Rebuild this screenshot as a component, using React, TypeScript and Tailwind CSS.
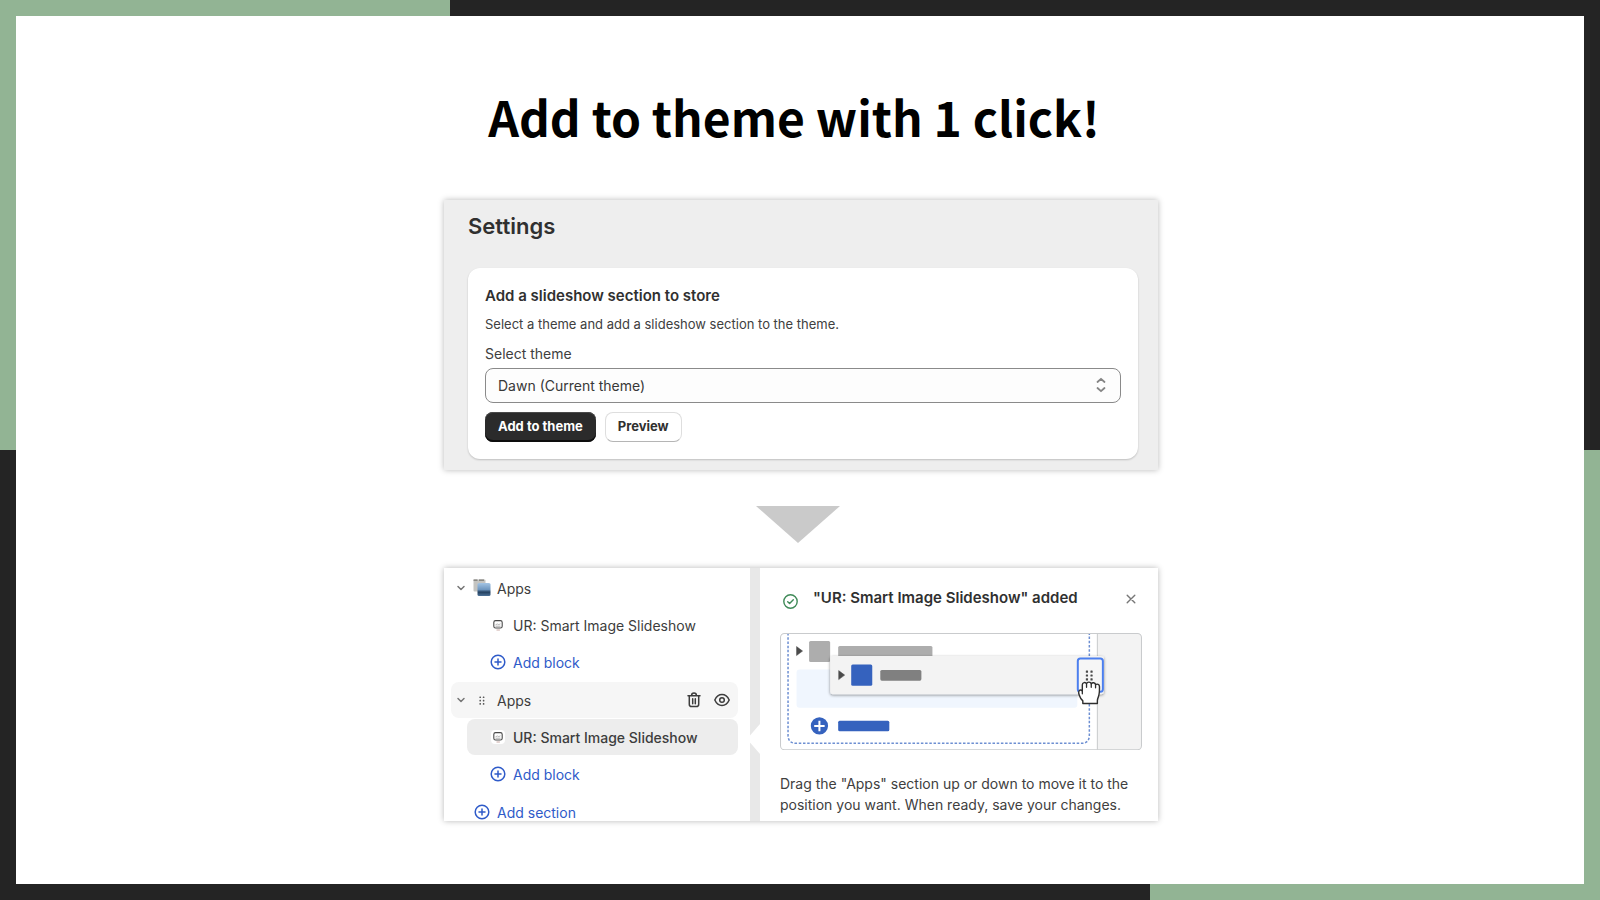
import type { ReactNode } from "react";
import { ChevronDown } from "lucide-react";

function PlusIcon() {
  return (
    <svg className="size-4 shrink-0" viewBox="0 0 16 16" fill="none" stroke="currentColor" strokeWidth="1.5" strokeLinecap="round" aria-hidden="true">
      <circle cx="8" cy="8" r="6.8" />
      <path d="M8 5v6M5 8h6" />
    </svg>
  );
}

function AppsThumb() {
  return (
    <svg className="size-[18px] shrink-0" viewBox="0 0 18 18" aria-hidden="true">
      <defs>
        <linearGradient id="sky" x1="0" y1="0" x2="0" y2="1">
          <stop offset="0" stopColor="#a3c4e4" />
          <stop offset="0.5" stopColor="#6f97c0" />
          <stop offset="0.7" stopColor="#23405f" />
          <stop offset="1" stopColor="#4d7298" />
        </linearGradient>
      </defs>
      <rect x="0.5" y="0.5" width="12" height="12" rx="1" fill="#c4c4c1" />
      <path d="M0.5 1.2h4M6 1.2h5" stroke="#77756f" strokeWidth="1.2" />
      <rect x="4.5" y="4" width="13" height="13" rx="1.5" fill="url(#sky)" />
    </svg>
  );
}

function BlockIcon() {
  return (
    <svg className="size-[14px] shrink-0 rounded-sm bg-white" viewBox="0 0 14 14" fill="none" aria-hidden="true">
      <rect x="2.8" y="2.6" width="8.4" height="7.4" rx="1.8" stroke="#4a4a4a" strokeWidth="1.1" />
      <path d="M4.5 6.8l1.8-.8 1.6.6 1.6-.8" stroke="#a5a5a5" strokeWidth="0.8" />
      <path d="M4.5 8.2h5" stroke="#999" strokeWidth="0.8" />
      <path d="M5.5 12h3.4" stroke="#c9a9a4" strokeWidth="1" />
    </svg>
  );
}

function DragDots() {
  return (
    <svg className="size-[18px] shrink-0" viewBox="0 0 18 18" fill="#5a5a5a" aria-hidden="true">
      {[5.5, 8.8, 12.1].map((y) => (
        <g key={y}>
          <rect x="6.4" y={y} width="1.6" height="1.6" rx="0.4" />
          <rect x="9.8" y={y} width="1.6" height="1.6" rx="0.4" />
        </g>
      ))}
    </svg>
  );
}

function TrashIcon() {
  return (
    <svg className="size-4" viewBox="0 0 16 16" fill="none" stroke="#3d3d3d" strokeWidth="1.5" strokeLinecap="round" strokeLinejoin="round" aria-hidden="true">
      <path d="M2 3.7h12M5.6 3.4C5.6 1.9 6.5 1.1 8 1.1s2.4.8 2.4 2.3M3.3 4v8.2c0 1.6.8 2.4 2.4 2.4h4.6c1.6 0 2.4-.8 2.4-2.4V4M6.7 6.7v5M9.3 6.7v5" />
    </svg>
  );
}

function EyeIcon() {
  return (
    <svg className="size-4" viewBox="0 0 16 16" fill="none" stroke="#3d3d3d" strokeWidth="1.5" aria-hidden="true">
      <path d="M.8 8C2.3 4.7 4.900 2.500 8 2.500s5.700 2.200 7.200 5.500c-1.500 3.300-4.100 5.500-7.200 5.500S2.300 11.300.8 8z" />
      <circle cx="8" cy="8" r="2.300" />
    </svg>
  );
}

function DragIllustration() {
  return (
    <svg className="block w-full" viewBox="0 0 361 117" role="img" aria-label="Dragging a section to a new position">
      <defs>
        <clipPath id="frame">
          <rect x="0.500" y="0.500" width="360" height="116" rx="4" />
        </clipPath>
        <filter id="lift" x="-5%" y="-20%" width="110%" height="150%">
          <feDropShadow dx="0" dy="1" stdDeviation="1.500" floodColor="#000" floodOpacity="0.45" />
        </filter>
      </defs>
      <g clipPath="url(#frame)">
        <rect width="361" height="117" fill="#fff" />
        <rect x="316" width="45" height="117" fill="#f3f3f3" />
        <path d="M316.500 0v117" stroke="#c9cbcd" />
        <rect x="16.500" y="36.500" width="280" height="38" rx="3" fill="#f0f6fe" />
        <path d="M8 0v102q0 8 8 8h284.500q8 0 8-8V0" fill="none" stroke="#6d8fd2" strokeWidth="1.500" strokeDasharray="2.500 1.700" />
        <path d="M16.500 13.500l6 4.500-6 4.500z" fill="#4b4b4b" stroke="#4b4b4b" strokeWidth="0.500" strokeLinejoin="round" />
        <rect x="29" y="8" width="21" height="21" rx="1.500" fill="#adadad" />
        <rect x="58" y="13" width="94" height="11" rx="1.500" fill="#adadad" />
        <circle cx="39.300" cy="92.700" r="8.600" fill="#3562be" />
        <path d="M39.300 87.500v10.400M34.100 92.700h10.400" stroke="#fff" strokeWidth="2" />
        <rect x="58" y="87.500" width="51" height="10.500" rx="1.500" fill="#3562be" />
      </g>
      <rect x="0.500" y="0.500" width="360" height="116" rx="4" fill="none" stroke="#c9cbcd" />
      <rect x="50" y="23" width="273" height="38" rx="3" fill="#f3f3f3" filter="url(#lift)" />
      <path d="M58.500 37.500l6 4.500-6 4.500z" fill="#4b4b4b" stroke="#4b4b4b" strokeWidth="0.500" strokeLinejoin="round" />
      <rect x="71" y="31.500" width="21" height="21" rx="1.500" fill="#3562be" />
      <rect x="100" y="37" width="41" height="10.500" rx="1.500" fill="#808080" />
      <rect x="297" y="25.500" width="25" height="33" rx="2.500" fill="#f6f6f6" stroke="#4c7fee" strokeWidth="2" />
      <g fill="#4a4a4a">
        {[37.500, 41.300, 45.100].map((y) => (
          <g key={y}>
            <rect x="305" y={y} width="2.200" height="2.200" rx="0.500" />
            <rect x="309.600" y={y} width="2.200" height="2.200" rx="0.500" />
          </g>
        ))}
      </g>
      <path
        d="M302 70.300v-2.600c-1.600-1.500-2.900-3.700-3.700-6.200-.9-2.600-.4-4.500 1.600-4.700l1.600.8V51.500c0-2.300 3.300-2.800 4.200-.8.8-2.300 4-2.200 4.700 0 1-1.700 3.900-1.300 4.300.8 1.600-1.200 3.900-.2 3.900 1.900 0 4.300.2 7.300-1.100 10.300-.5 1.200-1 2.400-1 3.900v2.700z"
        fill="#fff"
        stroke="#2e2e2e"
        strokeWidth="1.400"
        strokeLinejoin="round"
      />
      <path d="M301.500 57.500v3.200M305.700 51v3.200M310.400 51v3.200M314.700 51.800v2.800" stroke="#2e2e2e" strokeWidth="1.300" strokeLinecap="round" />
    </svg>
  );
}

function BlockRow({ selected = false }: { selected?: boolean }) {
  return (
    <a
      href="#block"
      className={
        selected
          ? "ml-4 flex h-9 items-center gap-2 rounded-lg bg-[#ededed] pl-6 font-medium"
          : "ml-4 flex h-9 items-center gap-2 rounded-lg pl-6"
      }
    >
      <BlockIcon />
      UR: Smart Image Slideshow
    </a>
  );
}

function AddButton({ nested = false, children }: { nested?: boolean; children: ReactNode }) {
  return (
    <button
      type="button"
      className={
        nested
          ? "ml-4 flex h-9 shrink-0 items-center gap-[7px] pl-[23px] text-[#2f5bc9]"
          : "flex h-9 shrink-0 items-center gap-[7px] pl-[23px] text-[#2f5bc9]"
      }
    >
      <PlusIcon />
      {children}
    </button>
  );
}

function SettingsPanel() {
  return (
    <section className="w-full bg-[#eeeeee] pb-[11px] pl-6 pr-5 pt-3 shadow-[0_0_6px_rgba(0,0,0,0.28)]">
      <h2 className="text-[22px] font-semibold leading-7 text-[#303030]">Settings</h2>
      <div className="mt-7 rounded-xl bg-white px-[17px] pb-[17px] pt-4 shadow-[0_1px_2px_rgba(0,0,0,0.2)]">
        <h3 className="text-[15px] font-semibold leading-6 text-[#303030]">Add a slideshow section to store</h3>
        <p className="mt-1 text-[13px] leading-6 text-[#404040]">Select a theme and add a slideshow section to the theme.</p>
        <label htmlFor="theme" className="mt-1.5 block text-[14px] leading-6 text-[#404040]">
          Select theme
        </label>
        <div className="relative mt-0.5">
          <select id="theme" className="block h-[35px] w-full appearance-none rounded-lg border border-[#8a8a8a] bg-[#fdfdfd] px-3 text-[14px] text-[#383838]">
            <option>Dawn (Current theme)</option>
          </select>
          <svg className="pointer-events-none absolute right-3 top-2 h-[18px] w-4" viewBox="0 0 16 18" fill="none" stroke="#858585" strokeWidth="1.800" strokeLinecap="round" strokeLinejoin="round" aria-hidden="true">
            <path d="M4.500 6L8 2.800 11.500 6M4.500 12L8 15.200 11.500 12" />
          </svg>
        </div>
        <div className="mt-[9px] flex gap-[9px]">
          <button type="button" className="h-[30px] rounded-lg bg-[#2b2b2b] px-[13px] text-[13px] font-bold text-white shadow-[inset_0_-2px_0_#0d0d0d,inset_0_1px_0_#4a4a4a]">
            Add to theme
          </button>
          <button type="button" className="h-[30px] rounded-lg border border-[#dedede] border-b-[#b5b5b5] bg-white px-3 text-[13px] font-bold text-[#303030]">
            Preview
          </button>
        </div>
      </div>
    </section>
  );
}

function EditorPanel() {
  return (
    <section className="flex h-[253px] w-full bg-[#e8e8e8] text-[14px] text-[#3d3d3d] shadow-[0_0_6px_rgba(0,0,0,0.28)]">
      <nav className="flex w-[306px] shrink-0 flex-col gap-0.5 overflow-hidden bg-white pl-[7px] pr-3 pt-0.5">
        <div className="flex flex-col gap-px">
          <div className="flex h-9 items-center pl-1">
            <ChevronDown className="size-3 text-[#777]" strokeWidth={3} />
            <span className="ml-1.5"><AppsThumb /></span>
            <span className="ml-1.5">Apps</span>
          </div>
          <BlockRow />
          <AddButton nested>Add block</AddButton>
        </div>
        <div className="flex flex-col gap-px">
          <div className="flex h-9 items-center rounded-lg bg-[#f6f6f6] pl-1 pr-2">
            <ChevronDown className="size-3 text-[#777]" strokeWidth={3} />
            <span className="ml-1.5"><DragDots /></span>
            <span className="ml-1.5">Apps</span>
            <button type="button" aria-label="Delete" className="ml-auto">
              <TrashIcon />
            </button>
            <button type="button" aria-label="Hide" className="ml-3">
              <EyeIcon />
            </button>
          </div>
          <BlockRow selected />
          <AddButton nested>Add block</AddButton>
        </div>
        <AddButton>Add section</AddButton>
      </nav>
      <div className="relative ml-2.5 flex-1 bg-white pl-5 pr-4">
        <svg className="absolute -left-3 top-[156px] h-[30px] w-3" viewBox="0 0 12 30" fill="#fff" aria-hidden="true">
          <path d="M12 0v30L2 18.500q-3-3.500 0-7z" />
        </svg>
        <div className="flex h-[65px] items-center pb-1">
          <svg className="ml-0.5 mt-1 size-4 shrink-0" viewBox="0 0 16 16" fill="none" stroke="#3f8a58" strokeWidth="1.400" strokeLinecap="round" strokeLinejoin="round" aria-hidden="true">
            <circle cx="8.500" cy="8.500" r="6.700" />
            <path d="M5.700 8.700l1.900 1.900 3.700-3.900" />
          </svg>
          <h3 className="ml-[15px] text-[15px] font-semibold text-[#303030]">"UR: Smart Image Slideshow" added</h3>
          <button type="button" aria-label="Close" className="ml-auto mr-1">
            <svg className="block size-3.5" viewBox="0 0 14 14" stroke="#777" strokeWidth="1.400" strokeLinecap="round" aria-hidden="true">
              <path d="M3.200 3.200l7.600 7.600M10.800 3.200l-7.600 7.600" />
            </svg>
          </button>
        </div>
        <DragIllustration />
        <p className="mt-[23px] text-[14px] leading-[21px] text-[#404040]">
          Drag the "Apps" section up or down to move it to the
          <br />
          position you want. When ready, save your changes.
        </p>
      </div>
    </section>
  );
}

export default function App() {
  return (
    <div className="flex min-h-screen flex-col bg-white font-['Inter',sans-serif]">
      <div className="flex h-4">
        <div className="w-[28.125%] bg-[#92b494]" />
        <div className="flex-1 bg-[#242424]" />
      </div>
      <div className="flex flex-1">
        <div className="flex w-4 flex-col">
          <div className="flex-1 bg-[#92b494]" />
          <div className="flex-1 bg-[#242424]" />
        </div>
        <main className="flex flex-1 flex-col items-center pl-0.5 pt-16">
          <h1 className="pr-3.5 font-['Noto_Sans_CJK_JP',sans-serif] text-[48px] font-bold leading-[72px] text-black">
            Add to theme with 1 click!
          </h1>
          <div className="mt-12 flex w-full max-w-[714px] flex-col items-center">
            <SettingsPanel />
            <svg className="mb-[25px] mr-1.5 mt-9 h-[37px] w-[84px]" viewBox="0 0 84 37" fill="#cacaca" aria-hidden="true">
              <path d="M0 0h84L42 37z" />
            </svg>
            <EditorPanel />
          </div>
        </main>
        <div className="flex w-4 flex-col">
          <div className="flex-1 bg-[#242424]" />
          <div className="flex-1 bg-[#92b494]" />
        </div>
      </div>
      <div className="flex h-4">
        <div className="w-[71.875%] bg-[#242424]" />
        <div className="flex-1 bg-[#92b494]" />
      </div>
    </div>
  );
}
